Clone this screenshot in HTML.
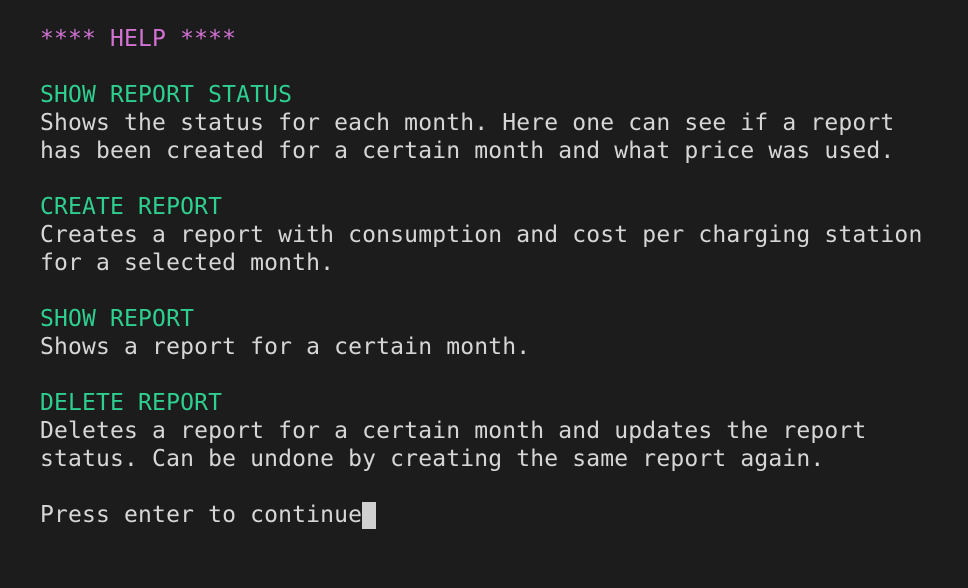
<!DOCTYPE html>
<html><head><meta charset="utf-8"><style>
html,body{margin:0;padding:0;background:#1c1c1c;width:968px;height:588px;overflow:hidden}
pre{margin:0;position:absolute;left:40px;top:25px;font-family:"DejaVu Sans Mono","Liberation Mono",monospace;font-size:23px;line-height:28px;color:#d6d6d6;letter-spacing:0.16px}
.m{color:#d273d4}.g{color:#2ecf8f}
.c{display:inline-block;width:14px;height:27px;background:#d0d0d0;vertical-align:-7px}
</style></head><body><pre><span class="m">**** HELP ****</span>

<span class="g">SHOW REPORT STATUS</span>
Shows the status for each month. Here one can see if a report
has been created for a certain month and what price was used.

<span class="g">CREATE REPORT</span>
Creates a report with consumption and cost per charging station
for a selected month.

<span class="g">SHOW REPORT</span>
Shows a report for a certain month.

<span class="g">DELETE REPORT</span>
Deletes a report for a certain month and updates the report
status. Can be undone by creating the same report again.

Press enter to continue<span class="c"></span></pre></body></html>
